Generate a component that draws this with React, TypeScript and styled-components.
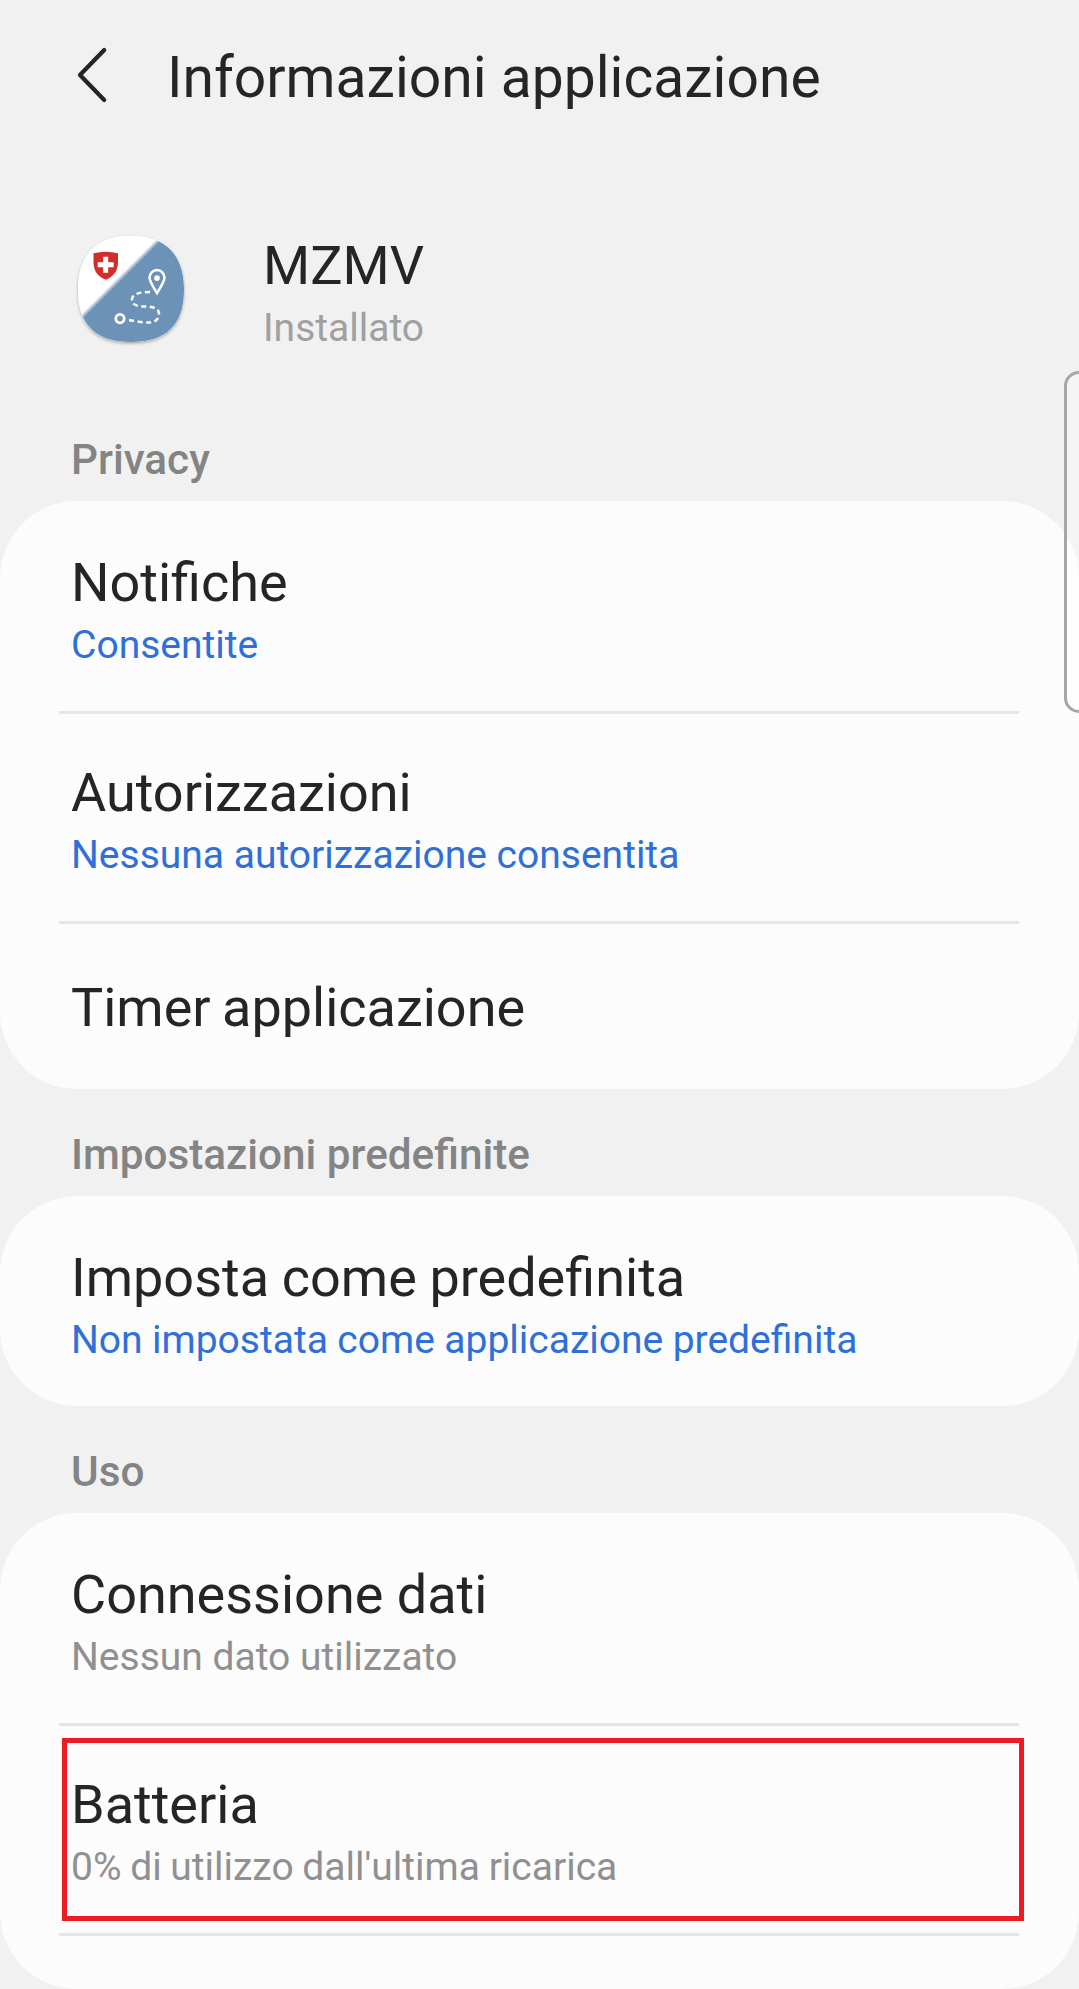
import React from "react";
import styled, { createGlobalStyle } from "styled-components";

const GlobalStyle = createGlobalStyle`
  * { box-sizing: border-box; }
  body { margin: 0; background: #f1f1f1; }
`;

const Screen = styled.main`
  position: relative;
  display: flex;
  flex-direction: column;
  width: 1079px;
  height: 1989px;
  overflow: hidden;
  background: #f1f1f1;
  color: #252525;
  font-family: Roboto, "Liberation Sans", sans-serif;
`;

const TopBar = styled.header`
  display: flex;
  align-items: center;
  height: 154px;
  padding: 2px 0 0 76px;
`;

const BackIcon = styled.svg`
  width: 32px;
  height: 56px;
  margin: 0 59px 6px 0;
`;

const PageTitle = styled.h1`
  margin: 0;
  font-size: 57px;
  font-weight: 400;
  line-height: 68px;
`;

const AppSummary = styled.section`
  display: flex;
  height: 270px;
  padding: 75px 0 0 71px;
`;

const AppIcon = styled.svg`
  width: 120px;
  height: 120px;
  margin-right: 72px;
`;

const TextPair = styled.div`
  display: flex;
  flex-direction: column;
  gap: 7px;
`;

const AppText = styled(TextPair)`
  padding-top: 5px;
`;

const Label = styled.span<{ $wordSpacing?: number }>`
  font-size: 54px;
  line-height: 64px;
  white-space: nowrap;
  word-spacing: ${(p) => p.$wordSpacing ?? 0}px;
`;

const Detail = styled.span<{ $color: string; $wordSpacing?: number }>`
  font-size: 39px;
  line-height: 46px;
  white-space: nowrap;
  word-spacing: ${(p) => p.$wordSpacing ?? 0}px;
  color: ${(p) => p.$color};
`;

const SectionTitle = styled.h2<{ $height: number }>`
  display: flex;
  align-items: flex-end;
  height: ${(p) => p.$height}px;
  margin: 0;
  padding: 0 0 16px 71px;
  font-size: 42.25px;
  font-weight: 500;
  line-height: 50px;
  color: #848484;
`;

const Card = styled.section`
  display: flex;
  flex-direction: column;
  flex: none;
  border-radius: 77px;
  background: #fcfcfc;
  overflow: hidden;
`;

const Row = styled.div<{ $height: number; $top: number }>`
  position: relative;
  height: ${(p) => p.$height}px;
  padding: ${(p) => p.$top}px 60px 0 71px;

  &:not(:first-child)::before {
    content: "";
    position: absolute;
    top: 0;
    left: 59px;
    right: 60px;
    height: 3px;
    background: #e6e6e6;
  }
`;

const Highlight = styled.div`
  position: absolute;
  top: 15px;
  left: 62px;
  width: 962px;
  height: 183px;
  border: 5px solid #ed1c24;
`;

const EdgeHandle = styled.div`
  position: absolute;
  top: 371px;
  right: -20px;
  width: 35px;
  height: 342px;
  border: 3px solid #a6a6a6;
  border-radius: 15px;
  background: rgba(255, 255, 255, 0.3);
`;

const BLUE = "#2e70d8";
const GREY = "#909090";

type Item = {
  label?: string;
  detail?: string;
  color?: string;
  height?: number;
  top?: number;
  labelSpacing?: number;
  detailSpacing?: number;
  marked?: boolean;
};
type Section = { title: string; headHeight: number; items: Item[] };

const sections: Section[] = [
  {
    title: "Privacy",
    headHeight: 77,
    items: [
      { label: "Notifiche", detail: "Consentite", color: BLUE },
      { label: "Autorizzazioni", detail: "Nessuna autorizzazione consentita", color: BLUE },
      { label: "Timer applicazione", height: 168, top: 55, labelSpacing: -2 },
    ],
  },
  {
    title: "Impostazioni predefinite",
    headHeight: 107,
    items: [
      {
        label: "Imposta come predefinita",
        detail: "Non impostata come applicazione predefinita",
        color: BLUE,
        labelSpacing: -0.75,
        detailSpacing: -0.25,
      },
    ],
  },
  {
    title: "Uso",
    headHeight: 107,
    items: [
      { label: "Connessione dati", detail: "Nessun dato utilizzato" },
      { label: "Batteria", detail: "0% di utilizzo dall'ultima ricarica", detailSpacing: -1, marked: true },
      { height: 56 },
    ],
  },
];

function MzmvIcon() {
  const shape = "M60 7C94 7 113 25 113 61S94 113 60 113S7 97 7 61S26 7 60 7Z";
  return (
    <AppIcon viewBox="0 0 120 120">
      <defs>
        <clipPath id="mask">
          <path d={shape} />
        </clipPath>
        <linearGradient id="diag" gradientUnits="userSpaceOnUse" x1="47.500" y1="47.500" x2="51" y2="51">
          <stop offset="0" stopColor="#fff" />
          <stop offset="1" stopColor="#6c92b8" />
        </linearGradient>
        <filter id="shade" x="-10%" y="-10%" width="120%" height="125%">
          <feDropShadow dx="0" dy="1.5" stdDeviation="1.4" floodColor="#000" floodOpacity="0.32" />
        </filter>
      </defs>
      <path d={shape} fill="#fff" filter="url(#shade)" />
      <rect width="120" height="120" fill="url(#diag)" clipPath="url(#mask)" />
      <g transform="translate(1 0.3)">
        <path d="M21.500 24Q34 21 46 24V33C46 42 41 47.500 34 50.500C26 47.500 21.500 42 21.500 33Z" fill="#d12e2a" />
        <path d="M33.700 27.500V43.500M25.700 35.500H41.700" stroke="#fff" strokeWidth="5" />
      </g>
      <g transform="translate(1 0.6)" fill="none" stroke="#fff" strokeWidth="2.500">
        <path d="M85 63.500C81 57 77.500 52 77.500 48A7.500 7.500 0 0 1 92.500 48C92.500 52 89 57 85 63.500Z" />
        <circle cx="85" cy="48.500" r="2.800" fill="#fff" stroke="none" />
        <circle cx="48" cy="89" r="4.200" strokeWidth="2.800" />
        <path d="M78 62.500C68 62.500 60 64 60 70S67 77 73 77S87 78 87 84S83 93 76 93S61 91 55 90" strokeDasharray="5 3.500" />
      </g>
    </AppIcon>
  );
}

export default function App() {
  return (
    <>
      <GlobalStyle />
      <Screen>
        <TopBar>
          <BackIcon viewBox="0 0 32 56" fill="none" stroke="#252525" strokeWidth="4.2" strokeLinecap="round" strokeLinejoin="round">
            <path d="M28.200 3L4 28L28.200 53" />
          </BackIcon>
          <PageTitle>Informazioni applicazione</PageTitle>
        </TopBar>
        <AppSummary>
          <MzmvIcon />
          <AppText>
            <Label>MZMV</Label>
            <Detail $color="#a0a0a0">Installato</Detail>
          </AppText>
        </AppSummary>
        {sections.map((section) => (
          <React.Fragment key={section.title}>
            <SectionTitle $height={section.headHeight}>{section.title}</SectionTitle>
            <Card>
              {section.items.map((item, i) => (
                <Row key={i} $height={item.height ?? 210} $top={item.top ?? 50}>
                  {item.label && (
                    <TextPair>
                      <Label $wordSpacing={item.labelSpacing}>{item.label}</Label>
                      {item.detail && (
                        <Detail $color={item.color ?? GREY} $wordSpacing={item.detailSpacing}>
                          {item.detail}
                        </Detail>
                      )}
                    </TextPair>
                  )}
                  {item.marked && <Highlight />}
                </Row>
              ))}
            </Card>
          </React.Fragment>
        ))}
        <EdgeHandle />
      </Screen>
    </>
  );
}
